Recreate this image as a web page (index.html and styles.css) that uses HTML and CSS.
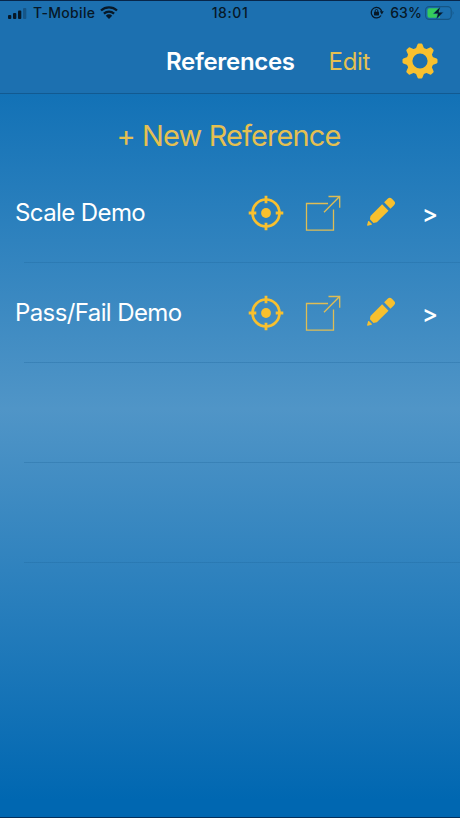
FILE: index.html
```html
<!DOCTYPE html>
<html lang="en">
<head>
  <meta charset="utf-8">
  <title>References</title>
  <link rel="stylesheet" href="styles.css">
</head>
<body>

  <svg class="sprite" width="0" height="0">
    <symbol id="target" viewBox="0 0 36 36">
      <circle cx="18" cy="18" r="13.5" fill="none" stroke="currentColor" stroke-width="2.7"/>
      <circle cx="18" cy="18" r="4.9" fill="currentColor"/>
      <path d="M18 .7v7.6M18 27.7v7.6M.7 18h7.6M27.7 18h7.6" stroke="currentColor" stroke-width="2.8"/>
    </symbol>
    <symbol id="export" viewBox="0 0 36 36">
      <path d="M23 8.5H1.5v26.6h27V14.5M19 17.2 34.6 1.5M23.5 1.5h11.2v11.2" fill="none" stroke="currentColor" stroke-width="1.3"/>
    </symbol>
    <symbol id="pencil" viewBox="0 0 30 30">
      <g fill="currentColor" transform="translate(1.3 28.5) rotate(-45)">
        <path d="M.5 0 3.8-2V2Z" stroke="currentColor" stroke-width="1" stroke-linejoin="round"/>
        <path d="M6.2-2.5 9-4.5H25.5V4.500H9L6.2 2.5Z"/>
        <path d="M28.3-4.500h5a3 3 0 0 1 3 3v3a3 3 0 0 1-3 3H28.300Z"/>
      </g>
    </symbol>
  </svg>

  <div class="screen">
    <header class="top">
      <div class="status">
        <div class="status-left">
          <svg class="signal" width="19" height="12" viewBox="0 0 19 12">
            <rect x="0" y="8" width="3.3" height="4" rx="1"/>
            <rect x="5" y="6" width="3.3" height="6" rx="1"/>
            <rect x="10" y="3.5" width="3.3" height="8.5" rx="1"/>
            <rect x="15" y="1" width="3.3" height="11" rx="1" opacity=".3"/>
          </svg>
          <span class="carrier">T-Mobile</span>
          <svg class="wifi" width="18" height="13" viewBox="0 0 18 13">
            <path d="M1 4.5a12 12 0 0 1 16 0M3.9 7.6a8 8 0 0 1 10.2 0" fill="none" stroke="currentColor" stroke-width="2.3"/>
            <path d="M9 13 5.8 9.8a4.8 4.8 0 0 1 6.4 0Z"/>
          </svg>
        </div>
        <span class="clock">18:01</span>
        <div class="status-right">
          <svg width="14" height="13" viewBox="0 0 14 13">
            <path d="M11 9.5A5.3 5.3 0 1 1 11.7 5.5" fill="none" stroke="currentColor" stroke-width="1.3"/>
            <path d="M9.8 5.3h4L11.8 8.5Z"/>
            <rect x="4" y="5.8" width="5" height="3.6" rx=".6"/>
            <path d="M5.2 6V4.8a1.3 1.3 0 0 1 2.6 0V6" fill="none" stroke="currentColor"/>
          </svg>
          <span class="percent">63%</span>
          <svg class="battery" width="30" height="14" viewBox="0 0 30 14">
            <rect x=".6" y=".6" width="25.6" height="12.8" rx="3.6" fill="none" stroke="#145585" stroke-width="1.1"/>
            <path d="M4.5 2.3H15v9.4H4.5a2 2 0 0 1-2-2V4.3a2 2 0 0 1 2-2Z" fill="#35cc5b"/>
            <path d="M27.7 4.8q1.8 2.2 0 4.4Z" fill="#145585"/>
            <path d="M15.3.8 8.2 7.7h4.6l-1.5 5.5 7-6.9h-4.5Z" stroke="#1c70b0" stroke-width=".4"/>
          </svg>
        </div>
      </div>
      <div class="nav">
        <h1>References</h1>
        <a class="edit">Edit</a>
        <svg class="gear" width="36" height="36" viewBox="-18 -18 36 36">
          <circle r="10.5" fill="none" stroke="currentColor" stroke-width="5.8"/>
          <g fill="currentColor">
            <path id="teeth" d="M-4.3-12-2.5-16.6Q-2.2-17.5-1.3-17.5H1.3Q2.2-17.5 2.5-16.6L4.3-12ZM-4.3 12-2.5 16.6Q-2.2 17.5-1.3 17.5H1.3Q2.2 17.5 2.5 16.6L4.3 12Z"/>
            <use href="#teeth" transform="rotate(45)"/>
            <use href="#teeth" transform="rotate(90)"/>
            <use href="#teeth" transform="rotate(135)"/>
          </g>
        </svg>
      </div>
    </header>

    <a class="new-reference">+ New Reference</a>

    <ul class="list">
      <li class="row">
        <span class="name">Scale Demo</span>
        <svg class="icon target"><use href="#target"/></svg>
        <svg class="icon export"><use href="#export"/></svg>
        <svg class="icon pencil"><use href="#pencil"/></svg>
        <span class="chevron">&gt;</span>
      </li>
      <li class="row">
        <span class="name">Pass/Fail Demo</span>
        <svg class="icon target"><use href="#target"/></svg>
        <svg class="icon export"><use href="#export"/></svg>
        <svg class="icon pencil"><use href="#pencil"/></svg>
        <span class="chevron">&gt;</span>
      </li>
      <li class="row"></li>
      <li class="row"></li>
    </ul>
  </div>

</body>
</html>
```

FILE: styles.css
```css
* {
  box-sizing: border-box;
}
body {
  margin: 0;
  font-family: Inter, "Liberation Sans", sans-serif;
  color: #fff;
}
.sprite {
  display: block;
}
.screen {
  height: 818px;
  border-top: 1px solid #08264a;
  border-bottom: 1px solid #04305c;
  background: linear-gradient(#0067b1, #5095c7 50%, #0067b1 98%);
  overflow: hidden;
}

/* status bar and navigation */
.top {
  height: 93px;
  background: #1c70b0;
  border-bottom: 1px solid #125a91;
}
.status {
  display: grid;
  grid-template-columns: 1fr auto 1fr;
  align-items: center;
  height: 23px;
  padding: 0 5px 0 8px;
  color: #071827;
  font-size: 14px;
  font-weight: 500;
}
.status svg {
  fill: currentColor;
}
.status-left,
.status-right {
  display: flex;
  align-items: center;
}
.status-right {
  justify-content: flex-end;
}
.carrier {
  margin: 0 5px 0 6px;
  letter-spacing: 0.3px;
}
.clock {
  margin-right: 3px;
  letter-spacing: 0.6px;
}
.percent {
  margin: 0 3px 0 6px;
  letter-spacing: 0.1px;
}
.nav {
  display: flex;
  align-items: center;
  height: 69px;
  padding: 6px 22px 0 166px;
}
h1 {
  width: 162.5px;
  margin: 0;
  font-size: 24px;
  font-weight: 600;
  letter-spacing: -0.3px;
}
.edit {
  width: 73px;
  color: #e5c051;
  font-size: 24px;
  letter-spacing: -0.3px;
}
.gear {
  flex: none;
  margin-bottom: 2px;
  color: #f8c02e;
}

.new-reference {
  display: block;
  height: 69px;
  padding: 24px 3px 0 0;
  color: #e5c051;
  font-size: 29px;
  letter-spacing: -0.9px;
  line-height: 36px;
  text-align: center;
}

/* reference list */
.list {
  margin: 0;
  padding: 0;
  list-style: none;
}
.row {
  display: flex;
  height: 100px;
  padding: 30px 0 0 15px;
  background: linear-gradient(#1b63984d, #1b63984d) 24px 99px / 100% 1px no-repeat;
}
.name {
  width: 232.5px;
  font-size: 24px;
  letter-spacing: -0.6px;
  line-height: 40px;
}
.icon {
  flex: none;
  width: 36px;
  height: 36px;
  margin-top: 1.5px;
  color: #f8c02e;
}
.export {
  margin-left: 21.5px;
  color: #dfbd55;
}
.pencil {
  width: 30px;
  height: 30px;
  margin: 4px 0 0 25px;
}
.chevron {
  margin-left: 26px;
  font-size: 24px;
  font-weight: 500;
  line-height: 42px;
}
```
